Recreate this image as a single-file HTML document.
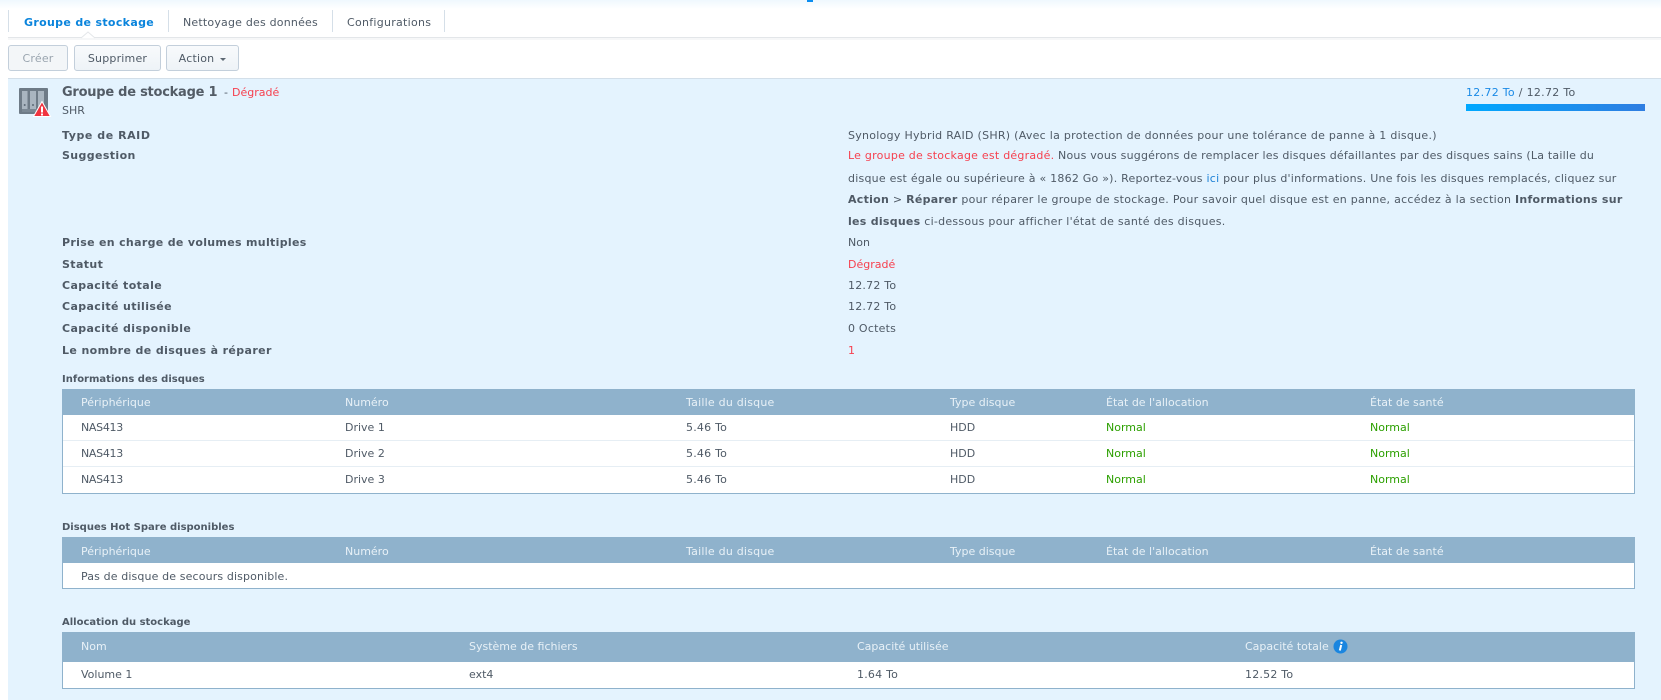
<!DOCTYPE html>
<html lang="fr"><head><meta charset="utf-8"><title>Groupe de stockage</title>
<style>
html,body{margin:0;padding:0;background:#fff}
body{position:relative;width:1661px;height:700px;overflow:hidden;font-family:"DejaVu Sans",Verdana,sans-serif;font-size:11px;color:#4f5a66}
.a{position:absolute;white-space:nowrap;line-height:16px;margin-top:1px}
.b{position:absolute}
b,.bd{font-weight:bold}
.r{color:#f6404f}
.g{color:#2ca000}
.hd{color:#e8f1f7}
.s{letter-spacing:.22px}
.l{letter-spacing:.38px;font-weight:bold}
.n{letter-spacing:-.3px}
.sep{position:absolute;width:1px;top:10px;height:22px;background:#d5dfe8}
.btn{position:absolute;top:45px;height:24px;border:1px solid #c3cfdb;border-radius:3px;background:linear-gradient(#f8fafc,#eef3f7);text-align:center;line-height:26px;letter-spacing:.2px;box-sizing:content-box}
.tbl{position:absolute;left:62px;width:1573px;box-sizing:border-box;border:1px solid #8fb2cc;border-top:0;background:#fff}
.th{position:absolute;left:62px;width:1573px;background:#8fb2cc}
.ln{position:absolute;left:63px;width:1571px;height:1px;background:#e6eef4}
</style></head><body>
<div class="b" style="left:0;top:0;width:1661px;height:9px;background:linear-gradient(#eff8fe,#fff)"></div>
<div class="b" style="left:807px;top:0;width:6px;height:2px;background:#0a8df0"></div>

<div class="sep" style="left:8px"></div><div class="sep" style="left:168px"></div><div class="sep" style="left:332px"></div><div class="sep" style="left:444px"></div>
<div class="a bd" style="left:24px;top:14px;color:#0a84dc;letter-spacing:.33px">Groupe de stockage</div>
<div class="a" style="left:183px;top:14px;letter-spacing:.2px">Nettoyage des données</div>
<div class="a" style="left:347px;top:14px;letter-spacing:.28px">Configurations</div>
<div class="b" style="left:8px;top:37px;width:1653px;height:1px;background:#e3e6e9"></div>
<div class="b" style="left:8px;top:38px;width:1653px;height:2px;background:#f6f7f8"></div>
<svg class="b" style="left:81px;top:31px" width="14" height="8"><path d="M0 7 L7 1 L14 7" fill="#fff" stroke="#e3e6e9"/></svg>

<div class="btn" style="left:8px;width:58px;color:#9aa5af;background:#f3f6f8">Créer</div>
<div class="btn" style="left:74px;width:85px">Supprimer</div>
<div class="btn" style="left:166px;width:71px"><span style="margin-right:12px">Action</span></div>
<svg class="b" style="left:220px;top:58px" width="6" height="3"><path d="M0 0H6L3 3Z" fill="#5d6873"/></svg>

<div class="b" style="left:8px;top:78px;width:1653px;height:622px;background:#e4f3fe;border-top:1px solid #d3dfe9;box-sizing:border-box"></div>

<svg class="b" style="left:18px;top:87px" width="34" height="32" viewBox="0 0 34 32">
<rect x="1" y="1" width="29" height="26" rx="1" fill="#6e7b87"/>
<rect x="4" y="4" width="5.500" height="18" fill="#a9b5c0"/><rect x="12" y="4" width="6" height="18" fill="#a9b5c0"/><rect x="20" y="4" width="6" height="18" fill="#a9b5c0"/>
<rect x="4" y="22" width="22" height="3" fill="#7b8894"/>
<circle cx="6.700" cy="18" r="1" fill="#5d6976"/><circle cx="15" cy="18" r="1" fill="#5d6976"/>
<path d="M24 14.500 L32.500 29.500 H15.500 Z" fill="#f0333f" stroke="#fff" stroke-width="1"/>
<rect x="23" y="19.500" width="2" height="6" fill="#fff"/><rect x="23" y="26.500" width="2" height="2" fill="#fff"/>
</svg>

<div class="a bd" style="left:62px;top:84px;font-size:13px;color:#535c66;letter-spacing:-.25px">Groupe de stockage 1</div>
<div class="a" style="left:224px;top:84px">-</div>
<div class="a r" style="left:232px;top:84px">Dégradé</div>
<div class="a" style="left:62px;top:102px">SHR</div>

<div class="a" style="left:1466px;top:84px;letter-spacing:.3px"><span style="color:#1a8ae6">12.72 To</span> / 12.72 To</div>
<div class="b" style="left:1466px;top:104px;width:179px;height:7px;background:linear-gradient(90deg,#00a8ff,#2f7de1)"></div>

<div class="a l" style="left:62px;top:127px;letter-spacing:.55px">Type de RAID</div>
<div class="a l" style="left:62px;top:147px">Suggestion</div>
<div class="a l" style="left:62px;top:234px;letter-spacing:.32px">Prise en charge de volumes multiples</div>
<div class="a l" style="left:62px;top:256px">Statut</div>
<div class="a l" style="left:62px;top:277px">Capacité totale</div>
<div class="a l" style="left:62px;top:298px">Capacité utilisée</div>
<div class="a l" style="left:62px;top:320px">Capacité disponible</div>
<div class="a l" style="left:62px;top:342px">Le nombre de disques à réparer</div>

<div class="a" style="left:848px;top:127px;letter-spacing:.275px">Synology Hybrid RAID (SHR) (Avec la protection de données pour une tolérance de panne à 1 disque.)</div>
<div class="a" style="left:848px;top:147px;letter-spacing:.2px"><span class="r" style="letter-spacing:.24px">Le groupe de stockage est dégradé.</span> Nous vous suggérons de remplacer les disques défaillantes par des disques sains (La taille du</div>
<div class="a" style="left:848px;top:170px;letter-spacing:.23px">disque est égale ou supérieure à « 1862 Go »). Reportez-vous <span style="color:#1a7fd6">ici</span> pour plus d'informations. Une fois les disques remplacés, cliquez sur</div>
<div class="a" style="left:848px;top:191px;letter-spacing:.27px"><b>Action</b> &gt; <b>Réparer</b> pour réparer le groupe de stockage. Pour savoir quel disque est en panne, accédez à la section <b>Informations sur</b></div>
<div class="a" style="left:848px;top:213px;letter-spacing:.27px"><b>les disques</b> ci-dessous pour afficher l'état de santé des disques.</div>
<div class="a" style="left:848px;top:234px">Non</div>
<div class="a r" style="left:848px;top:256px">Dégradé</div>
<div class="a s" style="left:848px;top:277px">12.72 To</div>
<div class="a s" style="left:848px;top:298px">12.72 To</div>
<div class="a s" style="left:848px;top:320px">0 Octets</div>
<div class="a r" style="left:848px;top:342px">1</div>

<div class="a bd" style="left:62px;top:371px;font-size:10px">Informations des disques</div>
<div class="tbl" style="top:415px;height:79px"></div>
<div class="th" style="top:389px;height:26px"></div>
<div class="ln" style="top:440px"></div><div class="ln" style="top:466px"></div>
<div class="a hd" style="left:81px;top:394px">Périphérique</div><div class="a hd" style="left:345px;top:394px">Numéro</div><div class="a hd s" style="left:686px;top:394px">Taille du disque</div><div class="a hd" style="left:950px;top:394px">Type disque</div><div class="a hd" style="left:1106px;top:394px">État de l'allocation</div><div class="a hd" style="left:1370px;top:394px">État de santé</div>

<div class="a n" style="left:81px;top:419px">NAS413</div><div class="a" style="left:345px;top:419px">Drive 1</div><div class="a s" style="left:686px;top:419px">5.46 To</div><div class="a" style="left:950px;top:419px">HDD</div><div class="a g" style="left:1106px;top:419px">Normal</div><div class="a g" style="left:1370px;top:419px">Normal</div>
<div class="a n" style="left:81px;top:445px">NAS413</div><div class="a" style="left:345px;top:445px">Drive 2</div><div class="a s" style="left:686px;top:445px">5.46 To</div><div class="a" style="left:950px;top:445px">HDD</div><div class="a g" style="left:1106px;top:445px">Normal</div><div class="a g" style="left:1370px;top:445px">Normal</div>
<div class="a n" style="left:81px;top:471px">NAS413</div><div class="a" style="left:345px;top:471px">Drive 3</div><div class="a s" style="left:686px;top:471px">5.46 To</div><div class="a" style="left:950px;top:471px">HDD</div><div class="a g" style="left:1106px;top:471px">Normal</div><div class="a g" style="left:1370px;top:471px">Normal</div>

<div class="a bd" style="left:62px;top:519px;font-size:10px">Disques Hot Spare disponibles</div>
<div class="tbl" style="top:563px;height:26px"></div>
<div class="th" style="top:537px;height:26px"></div>
<div class="a hd" style="left:81px;top:543px">Périphérique</div><div class="a hd" style="left:345px;top:543px">Numéro</div><div class="a hd s" style="left:686px;top:543px">Taille du disque</div><div class="a hd" style="left:950px;top:543px">Type disque</div><div class="a hd" style="left:1106px;top:543px">État de l'allocation</div><div class="a hd" style="left:1370px;top:543px">État de santé</div>
<div class="a" style="left:81px;top:568px;letter-spacing:.13px">Pas de disque de secours disponible.</div>

<div class="a bd" style="left:62px;top:614px;font-size:10px">Allocation du stockage</div>
<div class="tbl" style="top:662px;height:27px"></div>
<div class="th" style="top:632px;height:30px"></div>
<div class="a hd" style="left:81px;top:638px">Nom</div><div class="a hd" style="left:469px;top:638px">Système de fichiers</div><div class="a hd" style="left:857px;top:638px">Capacité utilisée</div><div class="a hd" style="left:1245px;top:638px">Capacité totale</div>
<svg class="b" style="left:1333px;top:639px" width="15" height="15" viewBox="0 0 15 15"><circle cx="7.500" cy="7.500" r="7" fill="#1a86e0"/><circle cx="8.500" cy="3.800" r="1.200" fill="#fff"/><path d="M8.200 6 L6.800 11.500" stroke="#fff" stroke-width="2"/></svg>
<div class="a" style="left:81px;top:666px">Volume 1</div><div class="a" style="left:469px;top:666px">ext4</div><div class="a s" style="left:857px;top:666px">1.64 To</div><div class="a s" style="left:1245px;top:666px">12.52 To</div>
</body></html>
